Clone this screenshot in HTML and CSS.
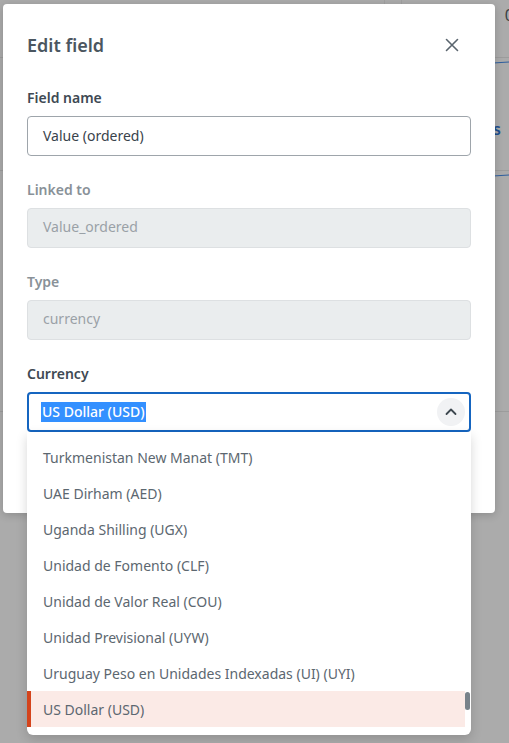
FILE: index.html
```html
<!DOCTYPE html>
<html lang="en">
<head>
<meta charset="utf-8">
<title>Edit field</title>
<link rel="stylesheet" href="styles.css">
</head>
<body>
<div class="page">
  <div class="page-top">
    <div class="page-col"></div>
    <div class="page-col narrow"></div>
    <div class="page-col end"><span class="page-num">0</span></div>
  </div>
  <div class="page-band">
    <span class="page-link">s</span>
  </div>
  <div class="page-band low"></div>
</div>

<div class="modal" role="dialog" aria-labelledby="modal-title">
  <div class="modal-head">
    <h2 id="modal-title" class="modal-title">Edit field</h2>
    <button class="close-btn" aria-label="Close">
      <svg width="14" height="14" viewBox="0 0 14 14" fill="none" stroke="#5a656e" stroke-width="1.6" stroke-linecap="round">
        <path d="M1.5 1.5L12.5 12.5M12.5 1.5L1.5 12.5"/>
      </svg>
    </button>
  </div>

  <div class="modal-body">
    <div class="field">
      <label class="field-label">Field name</label>
      <div class="input">Value (ordered)</div>
    </div>
    <div class="field">
      <label class="field-label muted">Linked to</label>
      <div class="input disabled">Value_ordered</div>
    </div>
    <div class="field">
      <label class="field-label muted">Type</label>
      <div class="input disabled">currency</div>
    </div>
    <div class="field">
      <label class="field-label">Currency</label>
      <div class="select-wrap">
        <div class="input select open">
          <span class="selected-text">US Dollar (USD)</span>
          <span class="chevron">
            <svg width="14" height="14" viewBox="0 0 14 14" fill="none" stroke="#3e4850" stroke-width="1.8" stroke-linecap="round" stroke-linejoin="round">
              <path d="M2.5 9L7 4.5L11.5 9"/>
            </svg>
          </span>
        </div>
        <ul class="options">
          <li class="option">Turkmenistan New Manat (TMT)</li>
          <li class="option">UAE Dirham (AED)</li>
          <li class="option">Uganda Shilling (UGX)</li>
          <li class="option">Unidad de Fomento (CLF)</li>
          <li class="option">Unidad de Valor Real (COU)</li>
          <li class="option">Unidad Previsional (UYW)</li>
          <li class="option">Uruguay Peso en Unidades Indexadas (UI) (UYI)</li>
          <li class="option active">US Dollar (USD)</li>
          <li class="scroll-thumb" aria-hidden="true"></li>
        </ul>
      </div>
    </div>
  </div>
</div>
</body>
</html>
```

FILE: styles.css
```css
* {
  box-sizing: border-box;
}

html, body {
  margin: 0;
  height: 100%;
}

body {
  font-family: "Noto Sans", "Open Sans", sans-serif;
  background: #ababab;
  overflow: hidden;
  position: relative;
}

/* dimmed page behind the dialog */
.page {
  height: 100%;
  display: flex;
  flex-direction: column;
}

.page-top {
  height: 58px;
  display: flex;
  border-bottom: 1px solid #9c9c9c;
}

.page-col {
  flex: 0 0 385px;
  border-right: 1px solid #a0a0a0;
}

.page-col.narrow {
  flex: 0 0 17px;
}

.page-col.end {
  flex: 1;
  border-right: 0;
  display: flex;
  justify-content: flex-end;
  padding: 4px 0 0;
}

.page-num {
  font-size: 16px;
  color: #3a3f44;
  margin-right: -5px;
}

.page-band {
  height: 113px;
  border-bottom: 1px solid #9c9c9c;
  display: flex;
  justify-content: flex-end;
  align-items: center;
  position: relative;
}

.page-band::before {
  content: "";
  position: absolute;
  right: 0;
  top: 4px;
  width: 16px;
  border-top: 1px solid #2f5f9e;
  transform: rotate(-4deg);
}

.page-link {
  font-size: 16px;
  font-weight: 600;
  color: #1e4f8e;
  margin-right: 8px;
  margin-top: 30px;
}

.page-band.low {
  height: 241px;
}

/* dialog */
.modal {
  position: absolute;
  left: 3px;
  top: 4px;
  width: 492px;
  height: 509px;
  background: #fff;
  border-radius: 4px;
  box-shadow: 0 2px 8px rgba(0, 0, 0, 0.18);
  padding: 24px 24px 0;
}

.modal-head {
  display: flex;
  justify-content: space-between;
  align-items: center;
  height: 34px;
}

.modal-title {
  margin: 0;
  font-size: 18px;
  font-weight: 600;
  color: #4b5660;
  line-height: 34px;
}

.close-btn {
  width: 36px;
  height: 36px;
  margin-right: 1px;
  border: 0;
  background: transparent;
  display: flex;
  align-items: center;
  justify-content: center;
  padding: 0;
  cursor: pointer;
}

.modal-body {
  padding-top: 26px;
  display: flex;
  flex-direction: column;
  gap: 24px;
}

.field {
  display: flex;
  flex-direction: column;
  gap: 8px;
}

.field-label {
  font-size: 14px;
  font-weight: 600;
  line-height: 20px;
  color: #3e4953;
}

.field-label.muted {
  color: #899198;
}

.input {
  height: 40px;
  border: 1px solid #9ea5ab;
  border-radius: 4px;
  padding: 0 15px 1px;
  display: flex;
  align-items: center;
  font-size: 14px;
  color: #39434c;
  background: #fff;
}

.input.disabled {
  background: #eaedee;
  border-color: #dde0e2;
  color: #9aa1a7;
  padding-bottom: 3px;
}

.select-wrap {
  position: relative;
}

.input.select.open {
  border: 2px solid #1565c0;
  padding: 0 4px 0 13px;
  justify-content: space-between;
}

.selected-text {
  background: #3390ff;
  color: #fff;
  font-weight: 500;
  line-height: 20px;
  padding: 0 1px;
  margin-left: -1px;
}

.chevron {
  width: 28px;
  height: 28px;
  border-radius: 50%;
  background: #f1f2f4;
  display: flex;
  align-items: center;
  justify-content: center;
}

/* option list */
.options {
  position: absolute;
  left: 0;
  right: 0;
  top: 40px;
  margin: 0;
  padding: 7px 6px 8px 0;
  list-style: none;
  background: #fff;
  border-radius: 0 0 6px 6px;
  box-shadow: 0 4px 12px rgba(0, 0, 0, 0.16);
  z-index: 2;
}

.option {
  height: 36px;
  display: flex;
  align-items: center;
  padding-left: 16px;
  font-size: 14px;
  color: #5c6770;
}

.option.active {
  background: #fbeae6;
  border-left: 4px solid #d4441c;
  padding-left: 12px;
}

.scroll-thumb {
  position: absolute;
  right: 1px;
  bottom: 25px;
  width: 5px;
  height: 18px;
  border-radius: 3px;
  background: #78828a;
}
```
